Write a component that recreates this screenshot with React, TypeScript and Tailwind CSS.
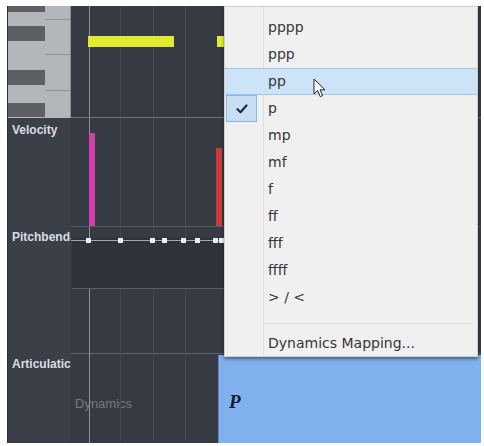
import React from 'react';

const DYNAMICS = ['pppp', 'ppp', 'pp', 'p', 'mp', 'mf', 'f', 'ff', 'fff', 'ffff', '> / <'];
const HOVERED = 'pp';
const CHECKED = 'p';

// pitchbend points, x in grid coordinates
const BEND_POINTS = [17, 49, 81, 93, 112, 126, 144, 150];
const GRID_LINES = [49, 82, 114];

// piano keyboard rows: [height, black key?, line inside white row at]
const KEY_ROWS: { h: number; black: boolean; line?: number }[] = [
  { h: 6, black: true },
  { h: 14, black: false, line: 7 },
  { h: 15, black: true },
  { h: 29, black: false, line: 13 },
  { h: 15, black: true },
  { h: 18, black: false, line: 5 },
  { h: 14, black: true },
  { h: 1, black: false },
];

const Check = () => (
  <svg width="12" height="10" viewBox="0 0 12 10" fill="none">
    <path d="M1.5 5.2 L4.5 8.2 L10.5 1.5" stroke="#1e2a3a" strokeWidth="2.2" strokeLinecap="round" strokeLinejoin="round" />
  </svg>
);

const Cursor = () => (
  <svg width="13" height="20" viewBox="0 0 13 20">
    <path d="M1 1 L1 16 L4.6 12.6 L7.2 18.6 L9.6 17.6 L7 11.8 L12 11.8 Z" fill="#fff" stroke="#222" strokeWidth="1" strokeLinejoin="round" />
  </svg>
);

const Keyboard = () => (
  <div className="flex flex-col h-[112px] bg-[#b3b6ba] border-r border-[#8d9096] overflow-hidden">
    {KEY_ROWS.map((row, i) => (
      <div key={i} className="flex" style={{ height: row.h }}>
        {row.black ? (
          <div className="w-[37px] bg-[#5d5f62]" />
        ) : (
          <div className="flex-1 flex flex-col">
            {row.line !== undefined && (
              <div className="ml-[37px] h-px bg-[#8e9195]" style={{ marginTop: row.line }} />
            )}
          </div>
        )}
      </div>
    ))}
  </div>
);

export default function App() {
  return (
    <div className="relative w-[484px] h-[446px] bg-white overflow-hidden font-['Liberation_Sans',Arial,sans-serif]">
      <div className="pt-[6px] pl-[7px] pr-[3px] pb-[3px] h-full">
        <div className="flex h-full bg-[#363b43] border-l border-[#2a2e34]">
          {/* lane headers */}
          <div className="w-[63px] flex flex-col bg-[#3b4048] text-[12px] font-bold text-[#d9dde3] leading-none">
            <Keyboard />
            <div className="h-[108px] pl-[4px] pt-[6px]">Velocity</div>
            <div className="h-[127px] pt-[5px]">
              <div className="flex items-center w-full">
                <span className="pl-[4px]">Pitchbend</span>
                <div className="flex-1 h-px bg-[#a3a8ae] mt-[3px]" />
              </div>
            </div>
            <div className="h-[90px] pl-[4px] pt-[5px] whitespace-nowrap overflow-hidden">Articulatic</div>
          </div>

          {/* grid canvas */}
          <div className="relative flex-1 flex flex-col">
            <div className="absolute inset-y-0 left-[18px] w-px bg-[#8b9199]" />
            {GRID_LINES.map(x => (
              <div key={x} className="absolute inset-y-0 w-px bg-[#40464f]" style={{ left: x }} />
            ))}

            <div className="relative h-[112px] border-b border-[#6f757d]">
              <div className="absolute left-[17px] top-[30px] w-[86px] h-[11px] bg-[#e2ea2c]" />
              <div className="absolute left-[146px] top-[30px] w-[10px] h-[11px] bg-[#e2ea2c]" />
            </div>

            <div className="relative h-[108px]">
              <div className="absolute left-[18px] top-[15px] w-[6px] bottom-0 bg-[#d43fae]" />
              <div className="absolute left-[145px] top-[30px] w-[6px] bottom-0 bg-[#c93c3c]" />
            </div>

            <div className="relative h-[127px] border-t border-[#555b63]">
              <div className="absolute left-[1px] top-[11px] w-[152px] h-[51px] bg-[#2e3239] border-b border-[#5a6068]" />
              <div className="absolute left-0 top-[13px] w-[153px] h-px bg-[#a3a8ae]" />
              {BEND_POINTS.map(x => (
                <div key={x} className="absolute top-[11px] w-[5px] h-[5px] bg-[#eceef0]" style={{ left: x - 2 }} />
              ))}
            </div>

            <div className="flex h-[90px] border-t border-[#5f656d]">
              <div className="w-[147px] pl-[4px] pt-[40px] text-[13px] text-[#737a84]">Dynamics</div>
              <div className="flex-1 mt-[1px] pl-[10px] pt-[36px] bg-[#80b1ee] border-l border-[#5d86bb]">
                <span className="text-[19px] font-bold italic text-[#101a36] leading-none font-['Liberation_Serif',serif]">P</span>
              </div>
            </div>
          </div>
        </div>
      </div>

      {/* dynamics popup menu */}
      <div className="absolute left-[224px] top-[6px] w-[254px] h-[351px] bg-[#f0f0f0] border border-[#cfcfcf] shadow-[0_2px_3px_rgba(0,0,0,0.45)] pt-[7px] text-[14px] text-[#363636] font-['DejaVu_Sans',sans-serif]">
        <div className="absolute left-[38px] top-0 bottom-0 w-px bg-[#e0e0e0]" />
        {DYNAMICS.map(d => (
          <div
            key={d}
            className={`relative flex items-center h-[27px] ${d === HOVERED ? 'bg-[#cde3f7] border-y border-[#9cc6ee]' : ''}`}
          >
            <div className="w-[39px] h-full flex items-center">
              {d === CHECKED && (
                <div className="ml-[1px] w-[31px] h-[27px] bg-[#c7def5] border border-[#86b7e6] flex items-center justify-center">
                  <Check />
                </div>
              )}
            </div>
            <span className="pl-[4px]">{d}</span>
            {d === HOVERED && (
              <div className="absolute left-[88px] top-[9px]">
                <Cursor />
              </div>
            )}
          </div>
        ))}
        <div className="ml-[39px] mr-[4px] mt-[12px] mb-[6px] h-px bg-[#d8d8d8]" />
        <div className="flex items-center h-[27px] pl-[43px]">Dynamics Mapping...</div>
      </div>
    </div>
  );
}
